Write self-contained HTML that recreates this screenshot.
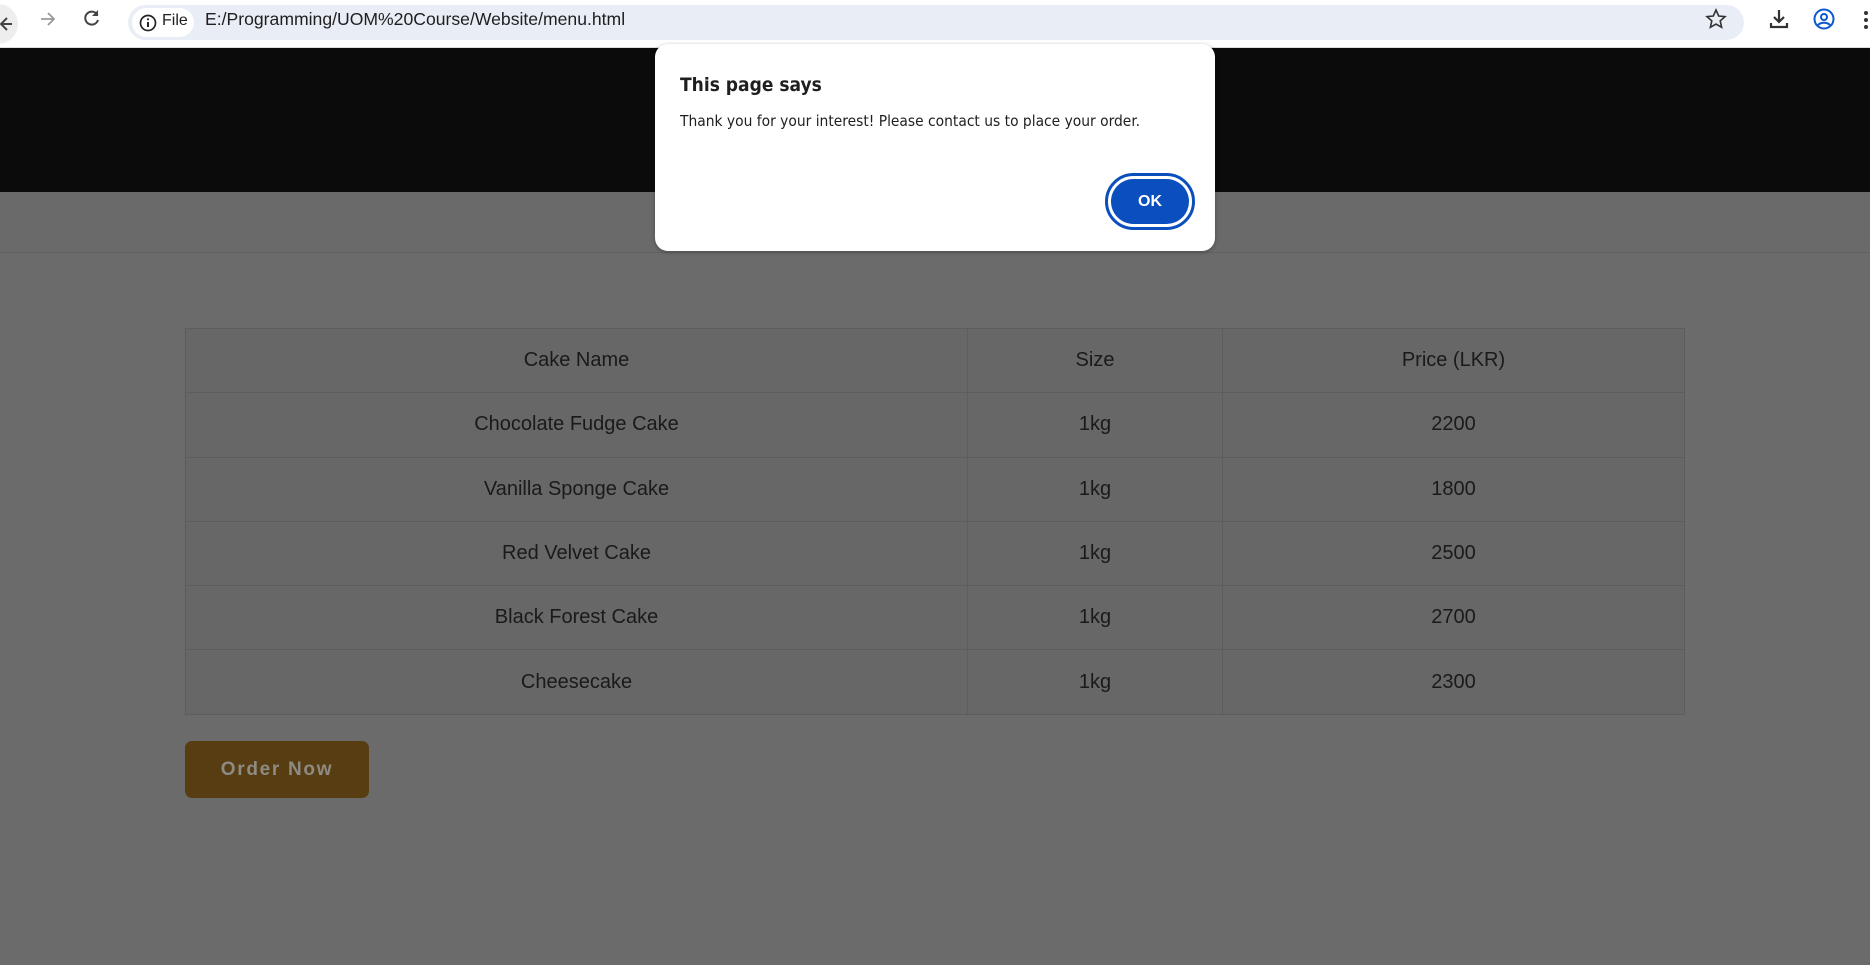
<!DOCTYPE html>
<html><head><meta charset="utf-8"><style>
*{margin:0;padding:0;box-sizing:border-box}
body{width:1870px;height:965px;overflow:hidden;background:#6b6b6b;font-family:"Liberation Sans",Arial,sans-serif;position:relative}
.tb{position:absolute;left:0;top:0;width:1870px;height:48px;background:#fff;border-bottom:1px solid #ddd}
.addr{position:absolute;left:128px;top:5px;width:1616px;height:35px;background:#e9eef6;border-radius:18px}
.chip{position:absolute;left:132px;top:8px;width:62px;height:29px;background:#fff;border-radius:15px;font-size:16px;color:#1f1f1f}
.url{position:absolute;left:205px;top:8px;font-size:17.6px;color:#1f1f1f;line-height:22px}
.hdr{position:absolute;left:0;top:48px;width:1870px;height:144px;background:#0b0b0b}
.band{position:absolute;left:0;top:192px;width:1870px;height:61px;background:#6a6a6a;border-bottom:1px solid #626262}
table{position:absolute;left:185px;top:328px;width:1500px;border-collapse:collapse;background:#676767}
td{border:1px solid #5d5d5d;height:64.3px;text-align:center;font-size:20px;color:#1a1a1a}
.btn{position:absolute;left:185px;top:741px;width:184px;height:57px;background:#573d11;border-radius:7px;color:#8e8a84;font-weight:bold;font-size:19px;letter-spacing:1.7px;text-align:center;line-height:57px}
.dlg{position:absolute;left:655px;top:44px;width:560px;height:207px;background:#fff;border-radius:13px;box-shadow:0 1px 4px rgba(0,0,0,.3)}
.t{position:absolute;left:25px;top:30px;font-size:19px;color:#1f1f1f;font-family:"DejaVu Sans Condensed","Liberation Sans",sans-serif;font-weight:600}
.m{position:absolute;left:25px;top:68px;font-size:15.4px;color:#1f1f1f;font-family:"DejaVu Sans Condensed","Liberation Sans",sans-serif}
.ok{position:absolute;left:450px;top:129px;width:90px;height:57px;border-radius:29px;border:3px solid #0b4fbf;padding:3px}
.ok div{width:100%;height:100%;background:#0b4fbf;border-radius:24px;color:#fff;font-weight:bold;font-size:16px;text-align:center;line-height:45px}
</style></head><body>
<div class="tb">
<div style="position:absolute;left:-22px;top:4px;width:40px;height:40px;border-radius:50%;background:#eee"></div>
<svg style="position:absolute;left:0;top:14px" width="14" height="20"><path d="M12 10H2M7 4l-6 6 6 6" stroke="#444" stroke-width="2" fill="none"/></svg>
<svg style="position:absolute;left:38px;top:9px" width="20" height="20"><path d="M3 10h13M10 4l6 6-6 6" stroke="#999" stroke-width="1.8" fill="none"/></svg>
<svg style="position:absolute;left:82px;top:8px" width="20" height="20"><path d="M15.5 7A6.5 6.5 0 1 0 16 12" stroke="#444" stroke-width="2" fill="none"/><path d="M16 2v6h-6z" fill="#444"/></svg>
<div class="addr"></div>
<div class="chip"><svg style="position:absolute;left:7px;top:6px" width="18" height="18"><circle cx="9" cy="9" r="7.5" stroke="#222" stroke-width="1.7" fill="none"/><path d="M9 8v5" stroke="#222" stroke-width="2"/><circle cx="9" cy="5.3" r="1.1" fill="#222"/></svg><span style="position:absolute;left:30px;top:4px">File</span></div>
<div class="url">E:/Programming/UOM%20Course/Website/menu.html</div>
<svg style="position:absolute;left:1705px;top:8px" width="22" height="22"><path d="M11 2l2.7 6 6.3.6-4.8 4.3 1.4 6.4L11 16l-5.6 3.3 1.4-6.4L2 8.6 8.3 8z" stroke="#333" stroke-width="1.6" fill="none"/></svg>
<svg style="position:absolute;left:1768px;top:8px" width="22" height="22"><path d="M11 2v12M6 9l5 5 5-5M3 15v4h16v-4" stroke="#333" stroke-width="2.2" fill="none"/></svg>
<svg style="position:absolute;left:1812px;top:7px" width="24" height="24"><circle cx="12" cy="12" r="9.5" stroke="#0b57d0" stroke-width="2" fill="none"/><circle cx="12" cy="10" r="3" stroke="#0b57d0" stroke-width="2" fill="none"/><path d="M6 18c3-3 9-3 12 0" stroke="#0b57d0" stroke-width="2" fill="none"/></svg>
<div style="position:absolute;left:1864px;top:11px;width:4px;height:4px;border-radius:2px;background:#333;box-shadow:0 7px #333,0 14px #333"></div>
</div>
<div class="hdr"></div>
<div class="band"></div>
<table>
<tr><td style="width:782px">Cake Name</td><td style="width:255px">Size</td><td>Price (LKR)</td></tr>
<tr><td>Chocolate Fudge Cake</td><td>1kg</td><td>2200</td></tr>
<tr><td>Vanilla Sponge Cake</td><td>1kg</td><td>1800</td></tr>
<tr><td>Red Velvet Cake</td><td>1kg</td><td>2500</td></tr>
<tr><td>Black Forest Cake</td><td>1kg</td><td>2700</td></tr>
<tr><td>Cheesecake</td><td>1kg</td><td>2300</td></tr>
</table>
<div class="btn">Order Now</div>
<div class="dlg">
<div class="t">This page says</div>
<div class="m">Thank you for your interest! Please contact us to place your order.</div>
<div class="ok"><div>OK</div></div>
</div>
</body></html>
